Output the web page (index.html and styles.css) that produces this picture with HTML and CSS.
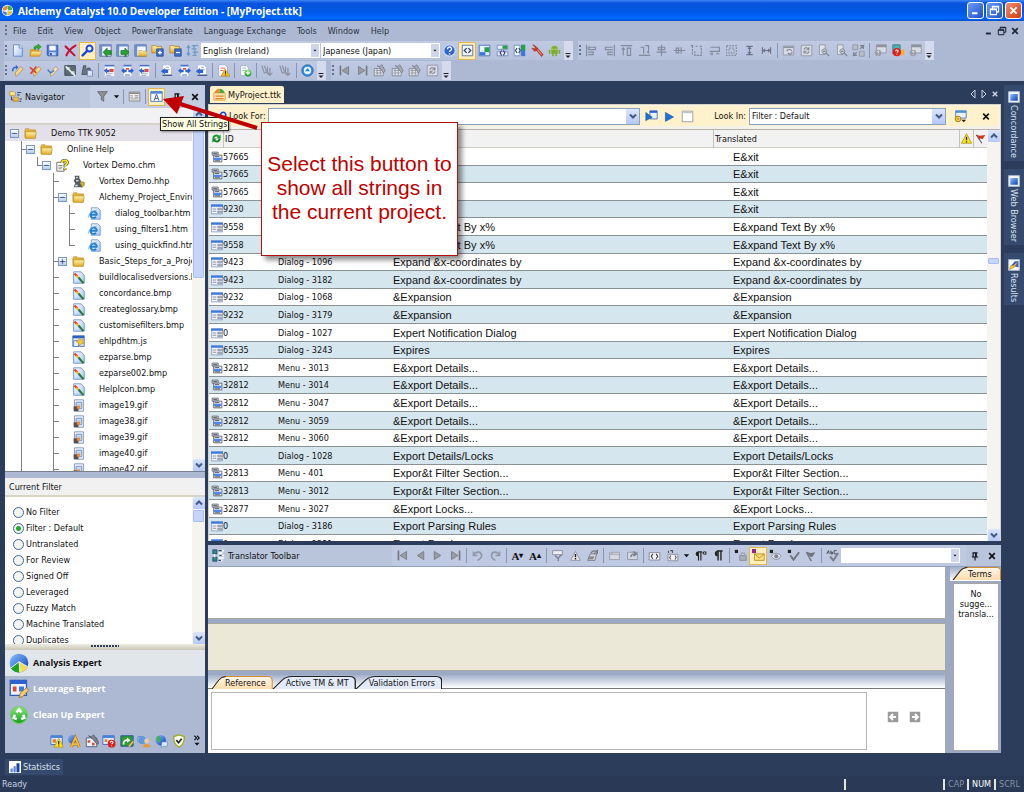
FILE: index.html
```html
<!DOCTYPE html>
<html lang="en">
<head>
<meta charset="UTF-8">
<meta name="viewport" content="width=device-width, initial-scale=1.0">
<title>Alchemy Catalyst 10.0 Developer Edition - [MyProject.ttk]</title>
<link rel="stylesheet" href="styles.css">
</head>
<body>

<!-- icon set -->
<svg class="sprite" aria-hidden="true">
    <defs>
        <linearGradient id="gBlue" x1="0" y1="0" x2="1" y2="1"><stop offset="0" stop-color="#8cc0ff"/><stop offset="1" stop-color="#0a3fb4"/></linearGradient>
        <linearGradient id="gGold" x1="0" y1="0" x2="0" y2="1"><stop offset="0" stop-color="#fff3a8"/><stop offset="1" stop-color="#e0a92a"/></linearGradient>
        <linearGradient id="gGreen" x1="0" y1="0" x2="0" y2="1"><stop offset="0" stop-color="#8fe87c"/><stop offset="1" stop-color="#119a1a"/></linearGradient>
        <linearGradient id="gTab" x1="0" y1="0" x2="0" y2="1"><stop offset="0" stop-color="#fff7ea"/><stop offset="1" stop-color="#ffdcae"/></linearGradient>
        <linearGradient id="gPage" x1="0" y1="0" x2="1" y2="1"><stop offset="0" stop-color="#fff"/><stop offset="1" stop-color="#a9c6f5"/></linearGradient>
    </defs>
    <symbol id="app" viewBox="0 0 16 16"><circle cx="8" cy="8" r="7" fill="#eef4ff"/><path d="M2 8a6 6 0 0 1 6-6v4L5 8z" fill="#f08a24"/><path d="M8 2a6 6 0 0 1 6 5l-5 1z" fill="#3fae49"/><path d="M14 9a6 6 0 0 1-6 5V9z" fill="#e8c021"/><path d="M7 14a6 6 0 0 1-5-5l5 1z" fill="#3a7be0"/></symbol>
    <symbol id="new" viewBox="0 0 16 16"><path d="M3 1h7l4 4v10H3z" fill="url(#gPage)" stroke="#5b7fc0"/><path d="M10 1v4h4" fill="#dce8fb" stroke="#5b7fc0"/></symbol>
    <symbol id="open" viewBox="0 0 16 16"><path d="M1 6h5l1 1h6v8H1z" fill="#d9a12c"/><path d="M3 9h13l-3 6H1z" fill="url(#gGold)" stroke="#b58520" stroke-width=".6"/><path d="M6 6c0-4 3-4 5-4V0l4 3.500-4 3.500V5C9 5 8 5 8 7z" fill="#2fae2f" stroke="#157515" stroke-width=".6"/></symbol>
    <symbol id="save" viewBox="0 0 16 16"><path d="M1.500 1.500h13v13h-12l-1-1z" fill="#4c7fdc" stroke="#2750a0"/><path d="M4 2h8v6H4z" fill="#f4f7ff"/><path d="M4 10h8v4H4z" fill="#c3d2f0"/><path d="M5 11h2v3H5z" fill="#2750a0"/></symbol>
    <symbol id="del" viewBox="0 0 16 16"><path d="M2 3l11 11M14 2C9 5 5 9 3 14" fill="none" stroke="#c41230" stroke-width="2.600" stroke-linecap="round"/></symbol>
    <symbol id="find" viewBox="0 0 16 16"><circle cx="10.500" cy="5.500" r="3.700" fill="#eaf2ff" stroke="#1c45e0" stroke-width="2.400"/><path d="M7.500 8.500L2 14" stroke="#1c45e0" stroke-width="3" stroke-linecap="round"/></symbol>
    <symbol id="wleft" viewBox="0 0 16 16"><path d="M1 1h14v14H1z" fill="#f3f6fc" stroke="#4a5f8f"/><path d="M1 1h14v2H1zM1 1h3v14H1z" fill="#6f8fc8"/><path d="M5 10l5-5v3h5v5h-5v3z" fill="#25a12e" stroke="#0e6416" stroke-width=".7"/></symbol>
    <symbol id="wright" viewBox="0 0 16 16"><path d="M1 1h14v14H1z" fill="#f3f6fc" stroke="#4a5f8f"/><path d="M1 1h14v2H1zM1 1h3v14H1z" fill="#6f8fc8"/><path d="M16 10l-5-5v3H6v5h5v3z" fill="#25a12e" stroke="#0e6416" stroke-width=".7"/></symbol>
    <symbol id="wfold" viewBox="0 0 16 16"><path d="M1 1h14v14H1z" fill="#f3f6fc" stroke="#4a5f8f"/><path d="M1 1h14v2H1zM1 1h3v14H1z" fill="#6f8fc8"/><path d="M6 8h4l1 1h5v6H6z" fill="url(#gGold)" stroke="#b58520" stroke-width=".6"/></symbol>
    <symbol id="fplus" viewBox="0 0 16 16"><path d="M1 2h5l1 1h6v8H1z" fill="url(#gGold)" stroke="#b58520"/><path d="M7 6h8v9H7z" fill="#3f6fc4" stroke="#274a90"/><path d="M11 8v5M8.500 10.500h5" stroke="#fff" stroke-width="1.500"/></symbol>
    <symbol id="fminus" viewBox="0 0 16 16"><path d="M1 2h5l1 1h6v8H1z" fill="url(#gGold)" stroke="#b58520"/><path d="M7 6h8v9H7z" fill="#3f6fc4" stroke="#274a90"/><path d="M8.500 10.500h5" stroke="#fff" stroke-width="1.500"/></symbol>
    <symbol id="lang" viewBox="0 0 16 16"><path d="M3 2v12M1 5l2-3 2 3M1 11l2 3 2-3M7 2h8M7 6h6M10 2v4M8 10h7M8 14h5M11 7v7" fill="none" stroke="#6f9bc4" stroke-width="1.500"/></symbol>
    <symbol id="help" viewBox="0 0 16 16"><circle cx="8" cy="8" r="7" fill="#2e63d4" stroke="#c7d8fa" stroke-width="1.500"/><path d="M5.500 6.500c0-4 5.500-3.500 5 0-.3 1.500-2.500 1.500-2.500 3.200M8 11.500v1.500" fill="none" stroke="#fff" stroke-width="1.700"/></symbol>
    <symbol id="code" viewBox="0 0 16 16"><path d="M1.500 1.500h13v13h-13z" fill="#eef3fc" stroke="#50617f"/><path d="M7 5L4 8l3 3M9 5l3 3-3 3" fill="none" stroke="#2c3d63" stroke-width="1.500"/></symbol>
    <symbol id="layg" viewBox="0 0 16 16"><path d="M1.500 1.500h13v13h-13z" fill="#dce8fb" stroke="#3c66b8"/><path d="M2 10h7v4H2z" fill="#3c78d8"/><path d="M8 4h6v6H8z" fill="#22a245"/><path d="M3 3h4v4H3z" fill="#fff"/></symbol>
    <symbol id="layc" viewBox="0 0 16 16"><path d="M1.500 1.500h13v5h-13zM1.500 9.500h13v5h-13z" fill="#e8effb" stroke="#6e86b8"/><path d="M8 2h6v4H8z" fill="#22a245"/><path d="M7 8l-2 3 2 3M9 8l2 3-2 3" fill="none" stroke="#2c3d63" stroke-width="1.300"/></symbol>
    <symbol id="layr" viewBox="0 0 16 16"><path d="M1.500 1.500h7v13h-7z" fill="#f2f5fb" stroke="#6e86b8"/><path d="M10 1h5v14h-5z" fill="#3c78d8"/><path d="M10 1h5v7h-5z" fill="#22a245"/><path d="M5 5L3 8l2 3M7 5l2 3-2 3" fill="none" stroke="#2c3d63" stroke-width="1.300"/></symbol>
    <symbol id="wrench" viewBox="0 0 16 16"><path d="M2 1l3 1 3 3-1 3-3 1-3-4 3 1 1-2z" fill="#d8422c" stroke="#8e2416" stroke-width=".6"/><path d="M6 7l2-2 7 8-2 2.500z" fill="#d8422c" stroke="#8e2416" stroke-width=".6"/><path d="M8 7l5 6" stroke="#f4b0a2"/></symbol>
    <symbol id="droid" viewBox="0 0 16 16"><path d="M4 6a4 4 0 0 1 8 0v6H4zM1 7h2v5H1zM13 7h2v5h-2zM5 12h2v3H5zM9 12h2v3H9z" fill="#7fae2e"/><path d="M5 1l1 2M11 1l-1 2M4 6.500h8" stroke="#b8d67a"/></symbol>
    <symbol id="al" viewBox="0 0 16 16"><path d="M2 1v14M4 4h9v3H4M4 10h6v3H4M6 3L4 5l2 2" fill="none" stroke="#828a9c" stroke-width="1.400"/></symbol>
    <symbol id="ar" viewBox="0 0 16 16"><path d="M14 1v14M12 4H3v3h9M12 10H6v3h6" fill="none" stroke="#828a9c" stroke-width="1.400"/></symbol>
    <symbol id="at" viewBox="0 0 16 16"><path d="M1 2h14M4 14V5l-2 2M4 5l2 2M9 5h4v9H9z" fill="none" stroke="#828a9c" stroke-width="1.400"/></symbol>
    <symbol id="ab" viewBox="0 0 16 16"><path d="M1 14h14M3 4h4v8M9 2h4v9l-2-2" fill="none" stroke="#828a9c" stroke-width="1.400"/></symbol>
    <symbol id="ac" viewBox="0 0 16 16"><path d="M8 1v14M4 4h8v3H4zM2 10h12" fill="none" stroke="#828a9c" stroke-width="1.400"/></symbol>
    <symbol id="am" viewBox="0 0 16 16"><path d="M1 8h14M4 5v6h3V5zM10 4v8" fill="none" stroke="#828a9c" stroke-width="1.400"/></symbol>
    <symbol id="sw" viewBox="0 0 16 16"><path d="M1 2h3M3 2v12M12 3h2v11H6V9M7 3h2" fill="none" stroke="#828a9c" stroke-width="1.400" stroke-dasharray="3 1"/></symbol>
    <symbol id="sh" viewBox="0 0 16 16"><path d="M3 4h11v5H2M2 12h4M14 12h-4M5 10v4" fill="none" stroke="#828a9c" stroke-width="1.400"/></symbol>
    <symbol id="sb" viewBox="0 0 16 16"><path d="M2 2h12v12H2zM5 5h6v6H5z" fill="none" stroke="#828a9c" stroke-width="1.400" stroke-dasharray="2 1.500"/></symbol>
    <symbol id="spv" viewBox="0 0 16 16"><path d="M4 3h8M4 13h8M8 4v8M6 6l2-2 2 2M6 10l2 2 2-2" fill="none" stroke="#6d7487" stroke-width="1.400"/></symbol>
    <symbol id="sph" viewBox="0 0 16 16"><path d="M3 4v8M13 4v8M4 8h8M6 6L4 8l2 2M10 6l2 2-2 2" fill="none" stroke="#6d7487" stroke-width="1.400"/></symbol>
    <symbol id="gwin" viewBox="0 0 16 16"><path d="M1.500 2.500h13v11h-13z" fill="#d9dce4" stroke="#8d929f"/><path d="M2 3h12v2H2z" fill="#8d929f"/><path d="M6 9c1-3 5-3 6 0M7 11l3 2 3-3" fill="none" stroke="#7d828f" stroke-width="1.500"/></symbol>
    <symbol id="gref" viewBox="0 0 16 16"><path d="M1.500 1.500h13v13h-13z" fill="#d9dce4" stroke="#8d929f"/><path d="M5 7c0-3 4-3 5-1M11 4v3H8M11 9c0 3-4 3-5 1M5 12V9h3" fill="none" stroke="#7d828f" stroke-width="1.300"/></symbol>
    <symbol id="gzoom" viewBox="0 0 16 16"><path d="M3 1h7v12H3z" fill="#dfe2ea" stroke="#8d929f"/><circle cx="9" cy="9" r="3" fill="#c8ccd6" stroke="#7d828f"/><path d="M11 11l4 4M7.500 9h3" stroke="#7d828f" stroke-width="1.500"/></symbol>
    <symbol id="gfit" viewBox="0 0 16 16"><path d="M1 1h6v6H1zM9 9h6v6H9z" fill="#b9bdc8" stroke="#8d929f"/><path d="M15 1l-5 5M1 15l5-5M10 2h4v4M2 10v4h4" fill="none" stroke="#7d828f" stroke-width="1.500"/></symbol>
    <symbol id="ghelp" viewBox="0 0 16 16"><path d="M3 1h12v10H3z" fill="#d9dce4" stroke="#8d929f"/><path d="M3 1h12v3H3z" fill="#8d929f"/><circle cx="5" cy="11" r="4" fill="#9a9eaa"/><path d="M4 10c0-2 3-1 2 0l-1 1M5 13v.8" stroke="#fff" fill="none"/></symbol>
    <symbol id="rhelp" viewBox="0 0 16 16"><path d="M1 1h9v11H1z" fill="#4fb0a8" stroke="#2b7a8a"/><circle cx="6" cy="10" r="5" fill="#df1d1d"/><path d="M4.500 9c0-2.500 3.500-2 3 0L6 10.500M6 12v1" stroke="#fff" fill="none" stroke-width="1.300"/><path d="M11 7h4v6l-4 2z" fill="#f3b12c"/></symbol>
    <symbol id="penb" viewBox="0 0 16 16"><path d="M6 15l-1-4 7-8 3 3-7 8z" fill="#f6d789" stroke="#9b7430" stroke-width=".7"/><path d="M1 9c0-5 3-6 5-6V1l3 3-3 3V5C4 5 3 6 3 9z" fill="#3468cc"/></symbol>
    <symbol id="penx" viewBox="0 0 16 16"><path d="M6 15l-1-4 7-8 3 3-7 8z" fill="#f6d789" stroke="#9b7430" stroke-width=".7"/><path d="M1 4l8 7M9 3l-7 9" stroke="#dc3b2a" stroke-width="1.900"/></symbol>
    <symbol id="penp" viewBox="0 0 16 16"><path d="M6 15l-1-4 7-8 3 3-7 8z" fill="#f6e3b4" stroke="#8e7a50" stroke-width=".7"/><path d="M2 7l4 4 4-3" fill="none" stroke="#4a72c4" stroke-width="1.700"/></symbol>
    <symbol id="wand" viewBox="0 0 16 16"><path d="M1 2h13v12H1z" fill="#5d6a78" stroke="#39424c"/><path d="M3 4h4v3H3zM9 9h4v4H9z" fill="#cde0c5"/><path d="M2 3l12 12" stroke="#e8ecf2" stroke-width="2"/></symbol>
    <symbol id="binoc" viewBox="0 0 16 16"><path d="M3 2h3v4l2 1V5h3l3 9H9l-1-4-1 3H1z" fill="#6a7380" stroke="#343b46" stroke-width=".7"/><path d="M8 8h6v7H8z" fill="#dfe7f5" stroke="#6e86b8"/></symbol>
    <symbol id="pgr" viewBox="0 0 16 16"><path d="M2 1h12v14H2z" fill="#fff" stroke="#b8c3dc" stroke-width=".6"/><path d="M2 1h12v2H2z" fill="#4a73c8"/><path d="M4 12h8M4 14h6" stroke="#8d9dc0"/><path d="M1 8l4-3v2h3v3H5v2z" fill="#2f62cc"/><path d="M8 6h5v4H8z" fill="#e04a3a"/></symbol>
    <symbol id="pgm" viewBox="0 0 16 16"><path d="M3 1h10v14H3z" fill="#fff" stroke="#b8c3dc" stroke-width=".6"/><path d="M3 1h10v2H3zM5 13h6v1H5z" fill="#4a73c8"/><path d="M0 8l4-3v2h3v3H4v2zM16 8l-4-3v2H9v3h3v2z" fill="#2f62cc"/><path d="M6 5h4v2H6z" fill="#e04a3a"/></symbol>
    <symbol id="pgb" viewBox="0 0 16 16"><path d="M3 1h8l3 3v9H3z" fill="#fff" stroke="#9aa9c8" stroke-width=".7"/><path d="M7 4h4M6 7h6" stroke="#8d9dc0"/><path d="M1 9l5-4v2h4v4H6v2z" fill="#2f62cc"/><path d="M3 14h12" stroke="#4b5d88" stroke-width="1.500"/></symbol>
    <symbol id="pgw" viewBox="0 0 16 16"><path d="M2 1h8l3 3v11H2z" fill="#fff" stroke="#9aa9c8"/><path d="M4 5h6M4 8h4" stroke="#e04a3a"/><path d="M10 6l6 9H5z" fill="#f7c21a" stroke="#a77b0a" stroke-width=".7"/><path d="M10.500 9v3M10.500 13v1" stroke="#222" stroke-width="1.200"/></symbol>
    <symbol id="pga" viewBox="0 0 16 16"><path d="M2 2h7l3 3v9H2z" fill="#fff" stroke="#9aa9c8"/><path d="M4 5h5M4 8h3" stroke="#8d9dc0"/><circle cx="11" cy="11" r="4.300" fill="url(#gGreen)"/><path d="M11 8.500v5M8.500 11h5" stroke="#fff" stroke-width="1.500"/></symbol>
    <symbol id="gclip" viewBox="0 0 16 16"><path d="M1 2l3 9 3-1M4 2l4 10 2-1M8 3v8l3 3 3-3M11 5v8" fill="none" stroke="#8d93a3" stroke-width="1.500"/></symbol>
    <symbol id="sync" viewBox="0 0 16 16"><circle cx="8" cy="8" r="7" fill="#3a8fd8" stroke="#1d5fa8"/><circle cx="8" cy="8" r="4.500" fill="#e9f4fd"/><path d="M8 5l3 4H5z" fill="#2a80cc"/></symbol>
    <symbol id="first" viewBox="0 0 16 16"><path d="M3 2v12" stroke="#74777f" stroke-width="2"/><path d="M13 3v10L5 8z" fill="#999ca3" stroke="#74777f"/></symbol>
    <symbol id="last" viewBox="0 0 16 16"><path d="M13 2v12" stroke="#74777f" stroke-width="2"/><path d="M3 3v10l8-5z" fill="#999ca3" stroke="#74777f"/></symbol>
    <symbol id="prev" viewBox="0 0 16 16"><path d="M12 3v10L4 8z" fill="#999ca3" stroke="#74777f"/></symbol>
    <symbol id="next" viewBox="0 0 16 16"><path d="M4 3v10l8-5z" fill="#999ca3" stroke="#74777f"/></symbol>
    <symbol id="gcal" viewBox="0 0 16 16"><path d="M1.500 5.500h11v9h-11z" fill="#e1e4ea" stroke="#7d828f"/><path d="M3 8h8M3 11h8M5 6v8M9 6v8" stroke="#8d929f"/><path d="M5 2l3 1 3-2 4 7-2 3-5-7z" fill="#a5a9b4" stroke="#666b78" stroke-width=".7"/></symbol>
    <symbol id="filter" viewBox="0 0 16 16"><path d="M2 2h12L9.500 8v6L6.500 12V8z" fill="#8d9096" stroke="#65686e"/></symbol>
    <symbol id="form" viewBox="0 0 16 16"><path d="M1.500 2.500h13v11h-13z" fill="#f4f4f4" stroke="#777"/><path d="M2 3h12v2H2z" fill="#888"/><path d="M3 7h3M8 7h5M3 9h3M8 9h5M3 11h10" stroke="#888"/></symbol>
    <symbol id="strings" viewBox="0 0 16 16"><path d="M1 2h14v12H1z" fill="#fff" stroke="#356bc4"/><path d="M1 2h14v2.500H1z" fill="#4b82da"/><path d="M5 13l3-8 3 8M6 10.500h4" fill="none" stroke="#3c5f9c" stroke-width="1.200"/></symbol>
    <symbol id="pin" viewBox="0 0 16 16"><path d="M4 3h8M5 3v6M10 3v6M9 3v6M3 9.500h10M8 10v5" fill="none" stroke="#111" stroke-width="1.800"/></symbol>
    <symbol id="x" viewBox="0 0 16 16"><path d="M3.500 3.500l9 9M12.500 3.500l-9 9" stroke="currentColor" stroke-width="2.600"/></symbol>
    <symbol id="restore" viewBox="0 0 16 16"><path d="M5 5V2h9v8h-3M2 6h9v8H2z" fill="none" stroke="currentColor" stroke-width="1.600"/><path d="M5 2.500h9M2 6.500h9" stroke="currentColor" stroke-width="2"/></symbol>
    <symbol id="mini" viewBox="0 0 16 16"><path d="M3 12h8" stroke="currentColor" stroke-width="3"/></symbol>
    <symbol id="down" viewBox="0 0 8 8"><path d="M1 2.500h6L4 6z" fill="currentColor"/></symbol>
    <symbol id="cdown" viewBox="0 0 12 12"><path d="M3 4.500l3 3 3-3" fill="none" stroke="#435a84" stroke-width="2"/></symbol>
    <symbol id="cup" viewBox="0 0 12 12"><path d="M3 7.500l3-3 3 3" fill="none" stroke="#435a84" stroke-width="2"/></symbol>
    <symbol id="tree" viewBox="0 0 16 16"><path d="M1 2h5l1 1h1v4H1zM5 9h7v5H5z" fill="url(#gGold)" stroke="#b58520" stroke-width=".7"/><path d="M10 3h5M10 6h3M3 8v4h2M13 11h3M13 14h2" stroke="#2c4fae" stroke-width="1.300" fill="none"/></symbol>
    <symbol id="folder" viewBox="0 0 16 16"><path d="M1 4l1-2h4l1 1.500h7V13H1z" fill="#e5b440" stroke="#b48a22" stroke-width=".7"/><path d="M2 6h13l-1 8H2z" fill="url(#gGold)" stroke="#b48a22" stroke-width=".7"/></symbol>
    <symbol id="chm" viewBox="0 0 16 16"><path d="M1 4h9v11H1z" fill="#fff" stroke="#555"/><path d="M3 8h5M3 10h5M3 12h4" stroke="#777"/><path d="M7 5c0-5 8-4 7 0-.5 2-3 2-3 4M11 11v2.500" fill="none" stroke="#555" stroke-width="3.600"/><path d="M7 5c0-5 8-4 7 0-.5 2-3 2-3 4M11 11v2" fill="none" stroke="#f7ea18" stroke-width="2.200"/></symbol>
    <symbol id="hhp" viewBox="0 0 16 16"><path d="M3 1h6v3l2 3-1 3 3 5H2l2-5-2-3 2-3z" fill="#555b60"/><path d="M5 2h2v2H5zM5 6h3v2H5zM4 12h3v2H4z" fill="#d5d9dc"/><path d="M10 8l5 1v4l-3 2z" fill="#d8b928" stroke="#6e5c10" stroke-width=".7"/></symbol>
    <symbol id="htm" viewBox="0 0 16 16"><path d="M4 1h8l3 3v11H4z" fill="url(#gPage)" stroke="#6a8cc8"/><path d="M11.500 9.500H3.500M11 9.500a4 4 0 1 0-1 2.800" fill="none" stroke="#1f7fd0" stroke-width="2.300"/><path d="M1 13c-1-4 4-9 10-9" fill="none" stroke="#56b3ea" stroke-width="1.200"/></symbol>
    <symbol id="bmp" viewBox="0 0 16 16"><path d="M2 1h9l4 4v10H2z" fill="url(#gPage)" stroke="#5e86cc"/><path d="M3 3l4 4" stroke="#e03c26" stroke-width="2.500"/><path d="M5 6l4 3" stroke="#f2bd22" stroke-width="2"/><path d="M8 8l6 7" stroke="#2b7a38" stroke-width="2.500"/></symbol>
    <symbol id="js" viewBox="0 0 16 16"><path d="M1 1h14v13H1z" fill="#dbe7fb" stroke="#3664b8"/><path d="M1 1h14v3H1z" fill="#2c5fc8"/><path d="M2 7h6v7H2z" fill="#eef4ff" stroke="#4a7ac8"/><path d="M9 3l2 3 3-1-1 3 2 2-4 1-2 3-1-4-3-2 3-1z" fill="#f2cb3c" stroke="#a98312" stroke-width=".6"/></symbol>
    <symbol id="gif" viewBox="0 0 16 16"><path d="M3 1h11v14H3z" fill="#f4f7fd" stroke="#6a84bb"/><path d="M5 4h7v8H5z" fill="#c6d8f2" stroke="#6a84bb"/><path d="M2 9h6v6H2z" fill="#5c5048"/><path d="M6 8h4v4H6z" fill="#ee8b3a"/></symbol>
    <symbol id="refresh" viewBox="0 0 16 16"><path d="M2 8c0-6 7-7 10-4l2-2v6H8l2-2C8 4 5 5 5 8z" fill="#17a02b"/><path d="M14 8c0 6-7 7-10 4l-2 2V8h6l-2 2c2 2 5 1 5-2z" fill="#0d8020"/></symbol>
    <symbol id="menu" viewBox="0 0 16 16"><path d="M1.500 1.500h8v4h-8z" fill="#e9e9ee" stroke="#444b5a"/><path d="M3.500 5.500h11v9h-11z" fill="#f4f4f8" stroke="#444b5a"/><path d="M3 3.500h5M5 7.500h6M5 13h7" stroke="#444b5a" stroke-width="1.200"/><path d="M4 9h10v3H4z" fill="#4f86f0"/></symbol>
    <symbol id="dlg" viewBox="0 0 16 16"><path d="M.5 2.500h15v12H.5z" fill="#f2f4f9" stroke="#7b8db4"/><path d="M0 2h16v3H0z" fill="#3c78e0"/><path d="M2 8h5M2 11h5" stroke="#8a93a8" stroke-width="1.300"/><path d="M9 7h5v2H9zM9 11h5v2H9z" fill="#c5cbd8" stroke="#69738a" stroke-width=".8"/></symbol>
    <symbol id="warn" viewBox="0 0 16 16"><path d="M8 1l7.500 14H.5z" fill="#fbe21c" stroke="#a98c08"/><path d="M8 5.500v5M8 12v1.700" stroke="#222" stroke-width="1.800"/></symbol>
    <symbol id="flag" viewBox="0 0 16 16"><path d="M1 2l6 2 8-1-4 6-3-1-1 1z" fill="#d6321e"/><path d="M2 3l8 12" stroke="#555" stroke-width="1.500"/></symbol>
    <symbol id="run" viewBox="0 0 16 16"><path d="M6 1h9v10H6z" fill="#eaf1ff" stroke="#3b6ac0"/><path d="M6 1h9v2.500H6z" fill="#2d63cc"/><path d="M1 3v10l8-4z" fill="#1f74d0" stroke="#0f4d98" stroke-width=".7"/></symbol>
    <symbol id="play" viewBox="0 0 16 16"><path d="M3 3v11l10-5.500z" fill="#1f74dc" stroke="#0f4d98" stroke-width=".7"/></symbol>
    <symbol id="blank" viewBox="0 0 16 16"><path d="M1.500 1.500h13v13h-13z" fill="#fff" stroke="#8b8f99"/><path d="M2 2h12v2H2z" fill="#c3c7d0"/></symbol>
    <symbol id="opts" viewBox="0 0 16 16"><path d="M2 1h13v9H2z" fill="#eaf1ff" stroke="#3b6ac0"/><path d="M2 1h13v2.500H2z" fill="#4a94d8"/><circle cx="5" cy="11" r="3.500" fill="#f6d04c" stroke="#94700f"/><circle cx="5" cy="11" r="1" fill="#94700f"/><path d="M9 12h6l-3 3z" fill="#222"/></symbol>
    <symbol id="trans" viewBox="0 0 16 16"><path d="M1 1h5v5H1zM1 10h5v5H1z" fill="#2e8a80" stroke="#28466e"/><path d="M8 2h7M8 5h5M8 11h7M8 14h5M8 8h7M3 6v4" stroke="#fff" stroke-width="2"/><path d="M8 2h4M9 8h3M8 14h3" stroke="#28466e" stroke-width="1.500"/></symbol>
    <symbol id="undo" viewBox="0 0 16 16"><path d="M3 3v5h5M3 8c3-6 10-5 10 0 0 3-3 5-5 6" fill="none" stroke="#9198a8" stroke-width="2"/></symbol>
    <symbol id="redo" viewBox="0 0 16 16"><path d="M13 3v5H8M13 8C10 2 3 3 3 8c0 3 3 5 5 6" fill="none" stroke="#9198a8" stroke-width="2"/></symbol>
    <symbol id="gnote" viewBox="0 0 16 16"><path d="M2 2h12v5H2z" fill="#eceef3" stroke="#80848f"/><path d="M13 7l-4 4v4M5 8l4 4" fill="none" stroke="#80848f" stroke-width="1.700"/></symbol>
    <symbol id="gwarn" viewBox="0 0 16 16"><path d="M8 3l6 11H2z" fill="#e6e7ea" stroke="#888c97"/><path d="M8 6v4M8 11v2" stroke="#222" stroke-width="1.700"/></symbol>
    <symbol id="gedit" viewBox="0 0 16 16"><path d="M5 6h8l-2 8H2z" fill="#d4d6da" stroke="#70737a"/><path d="M6 5c2-4 7-3 8-1M14 1v4h-4M4 10h6M3 12h6" fill="none" stroke="#70737a" stroke-width="1.500"/></symbol>
    <symbol id="gbox" viewBox="0 0 16 16"><path d="M2 4h12v9H2z" fill="#d5d9e2" stroke="#979dab"/><path d="M2 6.500h12M5 4v2" stroke="#979dab"/></symbol>
    <symbol id="gboxe" viewBox="0 0 16 16"><path d="M2 4h12v9H2z" fill="#d5d9e2" stroke="#888e9c"/><path d="M6 10c0-4 3-4 5-4M9 3l4 3-4 3" stroke="#777b86" stroke-width="1.700" fill="none"/></symbol>
    <symbol id="tag" viewBox="0 0 16 16"><path d="M1.500 4.500h13v9h-13z" fill="#f4f5f8" stroke="#797e8b"/><path d="M6 6L4 9l2 3M10 6l2 3-2 3" fill="none" stroke="#333" stroke-width="1.300"/></symbol>
    <symbol id="tagu" viewBox="0 0 16 16"><path d="M2.500 6.500h12v8h-12z" fill="#f4f5f8" stroke="#797e8b"/><path d="M6 8l-1.500 2.500L6 13M11 8l1.500 2.500L11 13M3 5V2M8 5V2H5" fill="none" stroke="#555" stroke-width="1.300"/></symbol>
    <symbol id="para" viewBox="0 0 16 16"><path d="M7 2a3.500 3.500 0 0 0 0 7z" fill="#222"/><path d="M7.500 2v12M11 2v12M6 2.500h7" stroke="#222" stroke-width="1.700"/></symbol>
    <symbol id="parad" viewBox="0 0 16 16"><path d="M5 3a3 3 0 0 0 0 6z" fill="#222"/><path d="M5.500 3v11M8.500 3v11M5 3.500h5M13 3l-2 2 2 2M14.500 3v4" fill="none" stroke="#222" stroke-width="1.400"/></symbol>
    <symbol id="lock" viewBox="0 0 16 16"><path d="M1 1h4v4H1z" fill="#222"/><path d="M7 8h8v6H7z" fill="#a9adb6" stroke="#838894"/><path d="M9 8V5h4v3" fill="none" stroke="#a0a4ae" stroke-width="1.500"/></symbol>
    <symbol id="mail" viewBox="0 0 16 16"><path d="M3 6h12v8H3z" fill="#fce07a" stroke="#b58520"/><path d="M3 6l6 5 6-5" fill="none" stroke="#b58520"/><path d="M0 0h5v5H0z" fill="#a0228c"/></symbol>
    <symbol id="eye" viewBox="0 0 16 16"><path d="M1 1h4v4H1z" fill="#222"/><path d="M3 9c3-5 9-5 12 0-3 5-9 5-12 0z" fill="#e3e5ea" stroke="#80848f"/><circle cx="9" cy="9" r="2.500" fill="#80848f"/></symbol>
    <symbol id="tick" viewBox="0 0 16 16"><path d="M1 1h4v4H1z" fill="#222"/><path d="M4 8l4 5 7-9" fill="none" stroke="#70747d" stroke-width="2.400"/></symbol>
    <symbol id="gflag" viewBox="0 0 16 16"><path d="M2 3l6 2 6-1-4 6-3-1z" fill="#70747d"/><path d="M3 4l6 11" stroke="#70747d" stroke-width="1.700"/></symbol>
    <symbol id="spell" viewBox="0 0 16 16"><path d="M5 9l4 5 6-9" fill="none" stroke="#7a7e87" stroke-width="2.400"/><path d="M1 6l2-4 1 4M6 2v4h2V4H6M13 2h-3v4h3" fill="none" stroke="#444" stroke-width="1.100"/></symbol>
    <symbol id="pie" viewBox="0 0 16 16"><circle cx="8" cy="8" r="7.500" fill="url(#gBlue)"/><path d="M8 7L1.500 12a7.500 7.500 0 0 0 6.500 3.500z" fill="#18a32c"/><path d="M8 7l7 4a7.500 7.500 0 0 1-7 4.500z" fill="#f5d95b"/><path d="M8 7l1 8.500M8 7l7 4M8 7l-6.500 5" stroke="#e8f2e0" stroke-width=".8"/></symbol>
    <symbol id="lev" viewBox="0 0 16 16"><path d="M1 1h13v12H1z" fill="#eef3ff" stroke="#2d5cb8"/><path d="M1 1h13v3H1z" fill="#2d63cc"/><path d="M3 6h3v4H3z" fill="#df4a2c"/><path d="M8 6h4v4H8z" fill="#3d78dc"/><path d="M8 15l1-4 5-4 2 2-5 5z" fill="#f2c877" stroke="#8e6a24" stroke-width=".6"/></symbol>
    <symbol id="clean" viewBox="0 0 16 16"><circle cx="8" cy="8" r="6.800" fill="url(#gGreen)" stroke="#6fce66"/><path d="M6 6l2-2.500L10 6M11.300 7.800l1 2.500-2.500 1M6.200 11.300l-2.500-1 1-2.500" fill="none" stroke="#fff" stroke-width="2"/></symbol>
    <symbol id="xwarn" viewBox="0 0 16 16"><path d="M1 2h13v10H1z" fill="#dfe9fb" stroke="#3b6ac0"/><path d="M1 2h13v2.500H1z" fill="#4a82d8"/><path d="M3 6h4v4H3z" fill="#e0812c"/><path d="M10 5l5.500 10h-11z" fill="#fbe21c" stroke="#a98c08" stroke-width=".7"/><path d="M10 8v4M10 13v1" stroke="#222" stroke-width="1.300"/></symbol>
    <symbol id="xfont" viewBox="0 0 16 16"><circle cx="6" cy="6" r="5" fill="url(#gBlue)"/><path d="M5 15L9.500 4 14 15M7 11.500h5" fill="none" stroke="#a66d10" stroke-width="3.200"/><path d="M5 15L9.500 4 14 15M7 11.500h5" fill="none" stroke="#f6bb3c" stroke-width="2"/></symbol>
    <symbol id="xcal" viewBox="0 0 16 16"><path d="M1.500 4.500h12v10h-12z" fill="#f1f3f8" stroke="#4a5672"/><path d="M3 7h3v3H3zM8 10h3v3H8z" fill="#d0552c"/><path d="M4 2l3 1 3-2 6 9-2 2-6-7z" fill="#7c8492" stroke="#3f4654" stroke-width=".7"/></symbol>
    <symbol id="xhelp" viewBox="0 0 16 16"><path d="M1 2h13v10H1z" fill="#dfe9fb" stroke="#3b6ac0"/><path d="M1 2h13v2.500H1z" fill="#4a82d8"/><path d="M3 6h3v3H3z" fill="#e0812c"/><circle cx="11" cy="11" r="4.500" fill="#df1d1d"/><path d="M9.500 10c0-2.500 3.500-2 3 0L11 11.500M11 13v1" fill="none" stroke="#fff" stroke-width="1.200"/></symbol>
    <symbol id="xgreen" viewBox="0 0 16 16"><path d="M1 2h14v12H1z" fill="#2f9a38" stroke="#20508e"/><path d="M3 12c0-5 3-6 5-6V4l4 3-4 3V8c-2 0-3 1-3 4z" fill="#f3fbf0"/><path d="M9 14l6-7 1 2-5 6z" fill="#f2c877" stroke="#8e6a24" stroke-width=".6"/></symbol>
    <symbol id="xuser" viewBox="0 0 16 16"><path d="M1 3h6v6H1z" fill="#cfe0fa" stroke="#5d87c8"/><circle cx="6" cy="7" r="4.500" fill="#5b9be0"/><circle cx="11" cy="8" r="2.800" fill="#f4c99c"/><path d="M7 15c0-5 8-5 8 0z" fill="#eb9a34"/></symbol>
    <symbol id="xglobe" viewBox="0 0 16 16"><circle cx="6.500" cy="7" r="6" fill="url(#gBlue)"/><path d="M2 3c3-2 5 0 4 2s1 3-1 5C3 9 1 6 2 3z" fill="#44b04a"/><path d="M8 9h6v5H9l-2 2z" fill="#dfe9fb" stroke="#5d87c8" stroke-width=".7"/></symbol>
    <symbol id="xshield" viewBox="0 0 16 16"><path d="M8 1l6 2c.5 6-2 10-6 12C4 13 1.500 9 2 3z" fill="#f6f8ee" stroke="#9fae2c" stroke-width="1.700"/><path d="M5 7l2.500 3L11 5.500" fill="none" stroke="#222" stroke-width="1.800"/></symbol>
    <symbol id="stats" viewBox="0 0 16 16"><path d="M0 0h16v16H0z" fill="#fff"/><path d="M2 10h3v5H2zM6 7h3v8H6z" fill="#5c86d4"/><path d="M10 3h4v12h-4z" fill="#1f3fa0"/></symbol>
    <symbol id="book" viewBox="0 0 16 16"><path d="M1 1h14v14H1z" fill="#fff" stroke="#b6c2dc" stroke-width="1.500"/><path d="M3 4h10v9H3z" fill="url(#gBlue)"/></symbol>
    <symbol id="res" viewBox="0 0 16 16"><path d="M1 1h14v14H1z" fill="#fff" stroke="#b6c2dc" stroke-width="1.500"/><path d="M9 3h5v8L4 9z" fill="#3a62c8"/><path d="M2 14l2-6 3 1 6-6-4 8z" fill="#f5c62b" stroke="#8e6a24" stroke-width=".5"/></symbol>
    <symbol id="doc" viewBox="0 0 16 16"><path d="M1 6h14v9H1z" fill="#f7e3b2" stroke="#d9a12c"/><path d="M2 6a6 5 0 0 1 6-5v5z" fill="#f08a24"/><path d="M8 1a6 5 0 0 1 6 5H8z" fill="#3fae49"/><path d="M3 10h10M3 13h10" stroke="#e0812c" stroke-width="1.500"/></symbol>
    <symbol id="tri" viewBox="0 0 8 10"><path d="M6 1v8L2 5z" fill="none" stroke="#c9d3e6"/></symbol>
    <symbol id="trir" viewBox="0 0 8 10"><path d="M2 1v8l4-4z" fill="none" stroke="#c9d3e6"/></symbol>
    <symbol id="more" viewBox="0 0 8 16"><path d="M1 2l2.500 2.500L1 7M4 2l2.500 2.500L4 7" fill="none" stroke="#111" stroke-width="1.300"/><path d="M1 10h6l-3 3z" fill="#111"/></symbol>
    <symbol id="hend" viewBox="0 0 8 16"><path d="M1.500 10.500h5" stroke="#222"/><path d="M1.500 12.500h5L4 15z" fill="#222"/></symbol>
    <symbol id="gl" viewBox="0 0 16 16"><path d="M1 1h14v14H1z" fill="#9b9b9b"/><path d="M12 8H5M8 4L4 8l4 4" fill="none" stroke="#fff" stroke-width="2.400"/></symbol>
    <symbol id="gr" viewBox="0 0 16 16"><path d="M1 1h14v14H1z" fill="#9b9b9b"/><path d="M4 8h7M8 4l4 4-4 4" fill="none" stroke="#fff" stroke-width="2.400"/></symbol>
</svg>

<header class="titlebar">
    <svg class="ico"><use href="#app"/></svg>
    <h1>Alchemy Catalyst 10.0 Developer Edition - [MyProject.ttk]</h1>
    <div class="winbtns">
        <button aria-label="Minimize"><svg class="ico"><use href="#mini"/></svg></button>
        <button aria-label="Restore"><svg class="ico"><use href="#restore"/></svg></button>
        <button class="close" aria-label="Close"><svg class="ico"><use href="#x"/></svg></button>
    </div>
</header>

<nav class="menubar">
    <i class="grip"></i>
    <button>File</button><button>Edit</button><button>View</button><button>Object</button><button>PowerTranslate</button><button>Language Exchange</button><button>Tools</button><button>Window</button><button>Help</button>
    <div class="mdi">
        <button aria-label="Minimize document"><svg><use href="#mini"/></svg></button>
        <button aria-label="Restore document"><svg><use href="#restore"/></svg></button>
        <button aria-label="Close document"><svg><use href="#x"/></svg></button>
    </div>
</nav>

<div class="toolbars">
    <div class="toolrow">
        <div class="toolbar">
            <i class="grip"></i>
            <div class="tools">
                <button aria-label="New"><svg><use href="#new"/></svg></button>
                <button aria-label="Open"><svg><use href="#open"/></svg></button>
                <button aria-label="Save"><svg><use href="#save"/></svg></button>
                <button aria-label="Delete"><svg><use href="#del"/></svg></button>
                <button class="on" aria-label="Find"><svg><use href="#find"/></svg></button>
                <button aria-label="Insert files"><svg><use href="#wleft"/></svg></button>
                <button aria-label="Extract files"><svg><use href="#wright"/></svg></button>
                <button aria-label="Insert folder"><svg><use href="#wfold"/></svg></button>
                <button aria-label="Expand"><svg><use href="#fplus"/></svg></button>
                <button aria-label="Collapse"><svg><use href="#fminus"/></svg></button>
                <button aria-label="Languages"><svg><use href="#lang"/></svg></button>
            </div>
            <span class="combo"><select aria-label="Source language"><option>English (Ireland)</option></select><svg><use href="#down"/></svg></span>
            <span class="combo"><select aria-label="Target language"><option>Japanese (Japan)</option></select><svg><use href="#down"/></svg></span>
            <div class="tools">
                <button aria-label="Help"><svg><use href="#help"/></svg></button>
                <button class="on" aria-label="Tags"><svg><use href="#code"/></svg></button>
                <button aria-label="Layout"><svg><use href="#layg"/></svg></button>
                <button aria-label="Split horizontal"><svg><use href="#layc"/></svg></button>
                <button aria-label="Split vertical"><svg><use href="#layr"/></svg></button>
                <button aria-label="Options"><svg><use href="#wrench"/></svg></button>
                <button aria-label="Android"><svg><use href="#droid"/></svg></button>
            </div>
            <button class="hend" aria-label="Toolbar options"><svg><use href="#hend"/></svg></button>
        </div>
        <div class="toolbar">
            <i class="grip"></i>
            <div class="tools">
                <button aria-label="Align left"><svg><use href="#al"/></svg></button>
                <button aria-label="Align right"><svg><use href="#ar"/></svg></button>
                <button aria-label="Align top"><svg><use href="#at"/></svg></button>
                <button aria-label="Align bottom"><svg><use href="#ab"/></svg></button>
                <button aria-label="Centre vertical"><svg><use href="#ac"/></svg></button>
                <button aria-label="Centre horizontal"><svg><use href="#am"/></svg></button>
                <button aria-label="Same width"><svg><use href="#sw"/></svg></button>
                <button aria-label="Same height"><svg><use href="#sh"/></svg></button>
                <button aria-label="Same size"><svg><use href="#sb"/></svg></button>
                <button aria-label="Space down"><svg><use href="#spv"/></svg></button>
                <button aria-label="Space across"><svg><use href="#sph"/></svg></button>
            </div>
            <i class="sep"></i>
            <div class="tools">
                <button aria-label="Test dialog"><svg><use href="#gwin"/></svg></button>
                <button aria-label="Refresh view"><svg><use href="#gref"/></svg></button>
                <button aria-label="Zoom in"><svg><use href="#gzoom"/></svg></button>
                <button aria-label="Zoom out"><svg><use href="#gzoom"/></svg></button>
                <button aria-label="Fit"><svg><use href="#gfit"/></svg></button>
            </div>
            <i class="sep"></i>
            <div class="tools">
                <button aria-label="Previous error"><svg><use href="#ghelp"/></svg></button>
                <button aria-label="Errors"><svg><use href="#rhelp"/></svg></button>
                <button aria-label="Next error"><svg><use href="#ghelp"/></svg></button>
            </div>
            <button class="hend" aria-label="Toolbar options"><svg><use href="#hend"/></svg></button>
        </div>
    </div>
    <div class="toolrow">
        <div class="toolbar">
            <i class="grip"></i>
            <div class="tools">
                <button aria-label="Edit back"><svg><use href="#penb"/></svg></button>
                <button aria-label="Edit reject"><svg><use href="#penx"/></svg></button>
                <button aria-label="Edit"><svg><use href="#penp"/></svg></button>
                <button aria-label="Pseudo translate"><svg><use href="#wand"/></svg></button>
                <button aria-label="Find in files"><svg><use href="#binoc"/></svg></button>
            </div>
            <i class="sep"></i>
            <div class="tools">
                <button aria-label="Leverage"><svg><use href="#pgr"/></svg></button>
                <button aria-label="Merge"><svg><use href="#pgm"/></svg></button>
                <button aria-label="Swap"><svg><use href="#pgr"/></svg></button>
            </div>
            <i class="sep"></i>
            <div class="tools">
                <button aria-label="Import"><svg><use href="#pgb"/></svg></button>
                <button aria-label="Exchange"><svg><use href="#pgm"/></svg></button>
                <button aria-label="Export"><svg><use href="#pgb"/></svg></button>
            </div>
            <i class="sep"></i>
            <div class="tools"><button aria-label="Validate"><svg><use href="#pgw"/></svg></button></div>
            <i class="sep"></i>
            <div class="tools"><button aria-label="Add entry"><svg><use href="#pga"/></svg></button></div>
            <i class="sep"></i>
            <div class="tools">
                <button aria-label="Clip"><svg><use href="#gclip"/></svg></button>
                <button aria-label="Unclip"><svg><use href="#gclip"/></svg></button>
            </div>
            <i class="sep"></i>
            <div class="tools"><button aria-label="Synchronise"><svg><use href="#sync"/></svg></button></div>
            <button class="hend" aria-label="Toolbar options"><svg><use href="#hend"/></svg></button>
        </div>
        <div class="toolbar">
            <i class="grip"></i>
            <div class="tools">
                <button aria-label="First"><svg><use href="#first"/></svg></button>
                <button aria-label="Last"><svg><use href="#last"/></svg></button>
                <button aria-label="Run"><svg><use href="#gcal"/></svg></button>
                <button aria-label="Run all"><svg><use href="#gcal"/></svg></button>
                <button aria-label="Run again"><svg><use href="#gcal"/></svg></button>
                <button aria-label="Update"><svg><use href="#gref"/></svg></button>
            </div>
            <button class="hend" aria-label="Toolbar options"><svg><use href="#hend"/></svg></button>
        </div>
    </div>
</div>

<div class="workspace">
    <aside class="navigator">
        <div class="panel-head">
            <svg class="ico"><use href="#tree"/></svg><h2>Navigator</h2>
            <div class="head-tools">
                <button class="wide" aria-label="Filter"><svg><use href="#filter"/></svg><svg class="arrow"><use href="#down"/></svg></button>
                <i class="sep"></i>
                <button aria-label="Show form"><svg><use href="#form"/></svg></button>
                <i class="sep"></i>
                <button class="on" aria-label="Show All Strings"><svg><use href="#strings"/></svg></button>
                <button class="plain" aria-label="Pin"><svg><use href="#pin"/></svg></button>
                <button class="plain" aria-label="Close navigator"><svg><use href="#x"/></svg></button>
            </div>
        </div>
        <div class="tree-pane">
            <div class="tree-scroll">
                <div class="tree-head"></div>
                <ul class="tree">
                    <li>
                        <div class="row sel"><i class="exp">−</i><svg><use href="#folder"/></svg><span>Demo TTK 9052</span></div>
                        <ul>
                            <li>
                                <div class="row"><i class="exp">−</i><svg><use href="#folder"/></svg><span>Online Help</span></div>
                                <ul>
                                    <li class="end">
                                        <div class="row"><i class="exp">−</i><svg><use href="#chm"/></svg><span>Vortex Demo.chm</span></div>
                                        <ul>
                                            <li><div class="row"><i></i><svg><use href="#hhp"/></svg><span>Vortex Demo.hhp</span></div></li>
                                            <li>
                                                <div class="row"><i class="exp">−</i><svg><use href="#folder"/></svg><span>Alchemy_Project_Environment</span></div>
                                                <ul>
                                                    <li><div class="row"><i></i><svg><use href="#htm"/></svg><span>dialog_toolbar.htm</span></div></li>
                                                    <li><div class="row"><i></i><svg><use href="#htm"/></svg><span>using_filters1.htm</span></div></li>
                                                    <li class="end"><div class="row"><i></i><svg><use href="#htm"/></svg><span>using_quickfind.htm</span></div></li>
                                                </ul>
                                            </li>
                                            <li><div class="row"><i class="exp">+</i><svg><use href="#folder"/></svg><span>Basic_Steps_for_a_Project</span></div></li>
                                            <li><div class="row"><i></i><svg><use href="#bmp"/></svg><span>buildlocalisedversions.bmp</span></div></li>
                                            <li><div class="row"><i></i><svg><use href="#bmp"/></svg><span>concordance.bmp</span></div></li>
                                            <li><div class="row"><i></i><svg><use href="#bmp"/></svg><span>createglossary.bmp</span></div></li>
                                            <li><div class="row"><i></i><svg><use href="#bmp"/></svg><span>customisefilters.bmp</span></div></li>
                                            <li><div class="row"><i></i><svg><use href="#js"/></svg><span>ehlpdhtm.js</span></div></li>
                                            <li><div class="row"><i></i><svg><use href="#bmp"/></svg><span>ezparse.bmp</span></div></li>
                                            <li><div class="row"><i></i><svg><use href="#bmp"/></svg><span>ezparse002.bmp</span></div></li>
                                            <li><div class="row"><i></i><svg><use href="#bmp"/></svg><span>HelpIcon.bmp</span></div></li>
                                            <li><div class="row"><i></i><svg><use href="#gif"/></svg><span>image19.gif</span></div></li>
                                            <li><div class="row"><i></i><svg><use href="#gif"/></svg><span>image38.gif</span></div></li>
                                            <li><div class="row"><i></i><svg><use href="#gif"/></svg><span>image39.gif</span></div></li>
                                            <li><div class="row"><i></i><svg><use href="#gif"/></svg><span>image40.gif</span></div></li>
                                            <li><div class="row"><i></i><svg><use href="#gif"/></svg><span>image42.gif</span></div></li>
                                        </ul>
                                    </li>
                                </ul>
                            </li>
                        </ul>
                    </li>
                </ul>
            </div>
            <div class="scrollbar tree-bar"><button aria-label="Up"><svg><use href="#cup"/></svg></button><i class="thumb"></i><button aria-label="Down"><svg><use href="#cdown"/></svg></button></div>
        </div>
        <h3 class="filter-head">Current Filter</h3>
        <div class="filter-pane">
            <div class="filters">
                <label><input type="radio" name="filter">No Filter</label>
                <label><input type="radio" name="filter" checked>Filter : Default</label>
                <label><input type="radio" name="filter">Untranslated</label>
                <label><input type="radio" name="filter">For Review</label>
                <label><input type="radio" name="filter">Signed Off</label>
                <label><input type="radio" name="filter">Leveraged</label>
                <label><input type="radio" name="filter">Fuzzy Match</label>
                <label><input type="radio" name="filter">Machine Translated</label>
                <label><input type="radio" name="filter">Duplicates</label>
            </div>
            <div class="scrollbar"><button aria-label="Up"><svg><use href="#cup"/></svg></button><i class="thumb"></i><button aria-label="Down"><svg><use href="#cdown"/></svg></button></div>
        </div>
        <div class="dots"><i></i></div>
        <button class="expert active"><svg><use href="#pie"/></svg>Analysis Expert</button>
        <button class="expert"><svg><use href="#lev"/></svg>Leverage Expert</button>
        <button class="expert"><svg><use href="#clean"/></svg>Clean Up Expert</button>
        <div class="shortcuts tools">
            <button aria-label="Validate Expert"><svg><use href="#xwarn"/></svg></button>
            <button aria-label="Font Expert"><svg><use href="#xfont"/></svg></button>
            <button aria-label="Update Expert"><svg><use href="#xcal"/></svg></button>
            <button aria-label="Query Expert"><svg><use href="#xhelp"/></svg></button>
            <button aria-label="Export Expert"><svg><use href="#xgreen"/></svg></button>
            <button aria-label="User Expert"><svg><use href="#xuser"/></svg></button>
            <button aria-label="Translate Expert"><svg><use href="#xglobe"/></svg></button>
            <button aria-label="Security Expert"><svg><use href="#xshield"/></svg></button>
            <button aria-label="More"><svg><use href="#more"/></svg></button>
        </div>
    </aside>

    <main class="centre">
        <div class="doctabs">
            <button class="doctab"><svg><use href="#doc"/></svg>MyProject.ttk</button>
            <div class="tabnav">
                <button aria-label="Previous tab"><svg><use href="#tri"/></svg></button>
                <button aria-label="Next tab"><svg><use href="#trir"/></svg></button>
                <button aria-label="Close tab"><svg><use href="#x"/></svg></button>
            </div>
        </div>

        <section class="document">
            <div class="lookbar">
                <svg><use href="#find"/></svg>
                <label for="lookfor">Look For:</label>
                <span class="combo big lookfor"><input type="text" id="lookfor"><i><svg><use href="#cdown"/></svg></i></span>
                <button aria-label="Find all"><svg><use href="#run"/></svg></button>
                <button aria-label="Find next"><svg><use href="#play"/></svg></button>
                <button aria-label="Stop"><svg><use href="#blank"/></svg></button>
                <label class="lookin" for="lookin">Look In:</label>
                <span class="combo big"><select id="lookin"><option>Filter : Default</option></select><i><svg><use href="#cdown"/></svg></i></span>
                <button class="opt" aria-label="Search options"><svg><use href="#opts"/></svg></button>
                <button class="opt" aria-label="Close search"><svg class="small"><use href="#x"/></svg></button>
            </div>
            <div class="gridpane">
                <div class="gridscroll">
                    <table class="grid">
                        <colgroup><col class="c-icon"><col class="c-id"><col class="c-type"><col class="c-src"><col><col class="c-flag"><col class="c-flag"></colgroup>
                        <thead>
                            <tr><th><svg><use href="#refresh"/></svg></th><th>ID</th><th></th><th></th><th>Translated</th><th><svg><use href="#warn"/></svg></th><th><svg><use href="#flag"/></svg></th></tr>
                        </thead>
                        <tbody>
                            <tr><td><svg><use href="#menu"/></svg></td><td>57665</td><td></td><td></td><td colspan="3">E&amp;xit</td></tr>
                            <tr><td><svg><use href="#menu"/></svg></td><td>57665</td><td></td><td></td><td colspan="3">E&amp;xit</td></tr>
                            <tr><td><svg><use href="#menu"/></svg></td><td>57665</td><td></td><td></td><td colspan="3">E&amp;xit</td></tr>
                            <tr><td><svg><use href="#dlg"/></svg></td><td>9230</td><td></td><td></td><td colspan="3">E&amp;xit</td></tr>
                            <tr><td><svg><use href="#dlg"/></svg></td><td>9558</td><td></td><td>E&amp;xpand Text By x%</td><td colspan="3">E&amp;xpand Text By x%</td></tr>
                            <tr><td><svg><use href="#dlg"/></svg></td><td>9558</td><td></td><td>E&amp;xpand Text By x%</td><td colspan="3">E&amp;xpand Text By x%</td></tr>
                            <tr><td><svg><use href="#dlg"/></svg></td><td>9423</td><td>Dialog - 1096</td><td>Expand &amp;x-coordinates by</td><td colspan="3">Expand &amp;x-coordinates by</td></tr>
                            <tr><td><svg><use href="#dlg"/></svg></td><td>9423</td><td>Dialog - 3182</td><td>Expand &amp;x-coordinates by</td><td colspan="3">Expand &amp;x-coordinates by</td></tr>
                            <tr><td><svg><use href="#dlg"/></svg></td><td>9232</td><td>Dialog - 1068</td><td>&amp;Expansion</td><td colspan="3">&amp;Expansion</td></tr>
                            <tr><td><svg><use href="#dlg"/></svg></td><td>9232</td><td>Dialog - 3179</td><td>&amp;Expansion</td><td colspan="3">&amp;Expansion</td></tr>
                            <tr><td><svg><use href="#dlg"/></svg></td><td>0</td><td>Dialog - 1027</td><td>Expert Notification Dialog</td><td colspan="3">Expert Notification Dialog</td></tr>
                            <tr><td><svg><use href="#dlg"/></svg></td><td>65535</td><td>Dialog - 3243</td><td>Expires</td><td colspan="3">Expires</td></tr>
                            <tr><td><svg><use href="#menu"/></svg></td><td>32812</td><td>Menu - 3013</td><td>E&amp;xport Details...</td><td colspan="3">E&amp;xport Details...</td></tr>
                            <tr><td><svg><use href="#menu"/></svg></td><td>32812</td><td>Menu - 3014</td><td>E&amp;xport Details...</td><td colspan="3">E&amp;xport Details...</td></tr>
                            <tr><td><svg><use href="#menu"/></svg></td><td>32812</td><td>Menu - 3047</td><td>&amp;Export Details...</td><td colspan="3">&amp;Export Details...</td></tr>
                            <tr><td><svg><use href="#menu"/></svg></td><td>32812</td><td>Menu - 3059</td><td>&amp;Export Details...</td><td colspan="3">&amp;Export Details...</td></tr>
                            <tr><td><svg><use href="#menu"/></svg></td><td>32812</td><td>Menu - 3060</td><td>&amp;Export Details...</td><td colspan="3">&amp;Export Details...</td></tr>
                            <tr><td><svg><use href="#dlg"/></svg></td><td>0</td><td>Dialog - 1028</td><td>Export Details/Locks</td><td colspan="3">Export Details/Locks</td></tr>
                            <tr><td><svg><use href="#menu"/></svg></td><td>32813</td><td>Menu - 401</td><td>Expor&amp;t Filter Section...</td><td colspan="3">Expor&amp;t Filter Section...</td></tr>
                            <tr><td><svg><use href="#menu"/></svg></td><td>32813</td><td>Menu - 3012</td><td>Expor&amp;t Filter Section...</td><td colspan="3">Expor&amp;t Filter Section...</td></tr>
                            <tr><td><svg><use href="#menu"/></svg></td><td>32877</td><td>Menu - 3027</td><td>&amp;Export Locks...</td><td colspan="3">&amp;Export Locks...</td></tr>
                            <tr><td><svg><use href="#dlg"/></svg></td><td>0</td><td>Dialog - 3186</td><td>Export Parsing Rules</td><td colspan="3">Export Parsing Rules</td></tr>
                            <tr><td><svg><use href="#dlg"/></svg></td><td>0</td><td>Dialog - 1221</td><td>Expert Parsing</td><td colspan="3">Expert Parsing</td></tr>
                        </tbody>
                    </table>
                </div>
                <div class="scrollbar grid-bar"><button aria-label="Up"><svg><use href="#cup"/></svg></button><i class="thumb"></i><button aria-label="Down"><svg><use href="#cdown"/></svg></button></div>
            </div>
        </section>

        <section class="translator">
            <div class="trans-head">
                <svg class="ico"><use href="#trans"/></svg><h2>Translator Toolbar</h2>
                <div class="trans-tools">
                    <div class="tools">
                        <button aria-label="First string"><svg><use href="#first"/></svg></button>
                        <button aria-label="Previous string"><svg><use href="#prev"/></svg></button>
                        <button aria-label="Next string"><svg><use href="#next"/></svg></button>
                        <button aria-label="Last string"><svg><use href="#last"/></svg></button>
                    </div>
                    <i class="sep"></i>
                    <div class="tools">
                        <button aria-label="Undo"><svg><use href="#undo"/></svg></button>
                        <button aria-label="Redo"><svg><use href="#redo"/></svg></button>
                    </div>
                    <i class="sep"></i>
                    <div class="tools">
                        <button class="letter" aria-label="Smaller text">A<sup>▾</sup></button>
                        <button class="letter" aria-label="Larger text">A<sup>▴</sup></button>
                    </div>
                    <i class="sep"></i>
                    <div class="tools">
                        <button aria-label="Notes"><svg><use href="#gnote"/></svg></button>
                        <button aria-label="Warnings"><svg><use href="#gwarn"/></svg></button>
                        <button aria-label="Revert"><svg><use href="#gedit"/></svg></button>
                    </div>
                    <i class="sep"></i>
                    <div class="tools">
                        <button aria-label="Panel"><svg><use href="#gbox"/></svg></button>
                        <button aria-label="Copy source"><svg><use href="#gboxe"/></svg></button>
                    </div>
                    <i class="sep"></i>
                    <div class="tools">
                        <button aria-label="Insert tag"><svg><use href="#tag"/></svg></button>
                        <button aria-label="Tag list"><svg><use href="#tagu"/></svg></button>
                    </div>
                    <svg class="arrow"><use href="#down"/></svg>
                    <div class="tools">
                        <button aria-label="Direction"><svg><use href="#parad"/></svg></button>
                        <button aria-label="Show marks"><svg><use href="#para"/></svg></button>
                    </div>
                    <i class="sep"></i>
                    <div class="tools">
                        <button aria-label="Lock"><svg><use href="#lock"/></svg></button>
                        <button class="on" aria-label="For translation"><svg><use href="#mail"/></svg></button>
                        <button aria-label="Review"><svg><use href="#eye"/></svg></button>
                        <button aria-label="Sign off"><svg><use href="#tick"/></svg></button>
                        <button aria-label="Flag"><svg><use href="#gflag"/></svg></button>
                    </div>
                    <i class="sep"></i>
                    <div class="tools"><button aria-label="Spelling"><svg><use href="#spell"/></svg></button></div>
                    <span class="combo"><select aria-label="Dictionary"><option></option></select><svg><use href="#down"/></svg></span>
                </div>
                <button class="plain" aria-label="Pin translator"><svg><use href="#pin"/></svg></button>
                <button class="plain" aria-label="Close translator"><svg><use href="#x"/></svg></button>
            </div>
            <div class="trans-body">
                <div class="editors">
                    <textarea class="source" aria-label="Source text"></textarea>
                    <textarea class="target" aria-label="Translation"></textarea>
                    <div class="reftabs">
                        <button class="tab active"><svg class="shape" preserveAspectRatio="none" viewBox="0 0 62 13"><path d="M0 13L7 4Q10 .5 14 .5H57Q61.500 .5 61.500 5V13" fill="url(#gTab)" stroke="#d28a2e"/><path d="M0 13L7 4Q10 .5 14 .5" fill="none" stroke="#222"/></svg><span>Reference</span></button>
                        <button class="tab"><svg class="shape" preserveAspectRatio="none" viewBox="0 0 62 13"><path d="M0 13L7 4Q10 .5 14 .5H57Q61.500 .5 61.500 5V13" fill="#e3ebf9" stroke="#222"/></svg><span>Active TM &amp; MT</span></button>
                        <button class="tab"><svg class="shape" preserveAspectRatio="none" viewBox="0 0 62 13"><path d="M0 13L7 4Q10 .5 14 .5H57Q61.500 .5 61.500 5V13" fill="#e3ebf9" stroke="#222"/></svg><span>Validation Errors</span></button>
                    </div>
                    <div class="reference">
                        <textarea aria-label="Reference text"></textarea>
                        <div class="refnav">
                            <button aria-label="Previous reference"><svg><use href="#gl"/></svg></button>
                            <button aria-label="Next reference"><svg><use href="#gr"/></svg></button>
                        </div>
                    </div>
                </div>
                <div class="terms">
                    <button class="tab active"><svg class="shape" preserveAspectRatio="none" viewBox="0 0 50 13"><path d="M3 13L10 4Q13 .5 17 .5H46Q49.500 .5 49.500 4V13" fill="url(#gTab)" stroke="#d28a2e"/><path d="M3 13L10 4Q13 .5 17 .5" fill="none" stroke="#222"/></svg><span>Terms</span></button>
                    <p>No<br>sugge...<br>transla...</p>
                </div>
            </div>
        </section>
    </main>

    <div class="sidetabs">
        <button><svg><use href="#book"/></svg>Concordance</button>
        <button><svg><use href="#book"/></svg>Web Browser</button>
        <button><svg><use href="#res"/></svg>Results</button>
    </div>
</div>

<div class="dock"><button><svg><use href="#stats"/></svg>Statistics</button></div>
<footer class="statusbar"><span class="ready">Ready</span><i></i><span class="fill"></span><i></i><span>CAP</span><i></i><span class="lit">NUM</span><i></i><span>SCRL</span></footer>

<!-- help overlay -->
<div class="tooltip">Show All Strings</div>
<svg class="pointer" viewBox="0 0 100 40"><path d="M95 32L15 7" stroke="#c00000" stroke-width="4"/><path d="M1 3L22 0 15 18z" fill="#c00000"/></svg>
<div class="callout">Select this button to show all strings in the current project.</div>

</body>
</html>
```

FILE: styles.css
```css
* {
    box-sizing: border-box;
}
body {
    margin: 0;
    height: 100vh;
    display: flex;
    flex-direction: column;
    overflow: hidden;
    background-color: #2c3d5c;
    color: #111;
    font-family: "DejaVu Sans Condensed", "DejaVu Sans", sans-serif;
    font-size: 9px;
    line-height: 12px;
}
h1, h2, h3, p, ul {
    margin: 0;
    padding: 0;
    font-size: 9px;
    font-weight: normal;
    list-style: none;
}
button, input, select, textarea {
    margin: 0;
    padding: 0;
    border: none;
    border-radius: 0;
    background: none;
    color: inherit;
    font: inherit;
    outline: none;
}
svg {
    display: block;
    flex: none;
    width: 13px;
    height: 13px;
}
.sprite {
    position: absolute;
    width: 0;
    height: 0;
}

/* title bar */
.titlebar {
    flex: none;
    height: 21px;
    display: flex;
    align-items: center;
    gap: 4px;
    padding: 0 2px 0 1px;
    background: linear-gradient(#3a86f5 0, #0a52dc 15%, #0058e6 55%, #0067ff 85%, #0050d0 100%);
    color: #fff;
}
.titlebar h1 {
    flex: 1;
    font-family: "Open Sans", sans-serif;
    font-size: 10px;
    font-weight: bold;
}
.winbtns {
    display: flex;
    gap: 2px;
}
.winbtns button {
    width: 17px;
    height: 17px;
    display: flex;
    align-items: center;
    justify-content: center;
    border: 1px solid #fff;
    border-radius: 3px;
    background: linear-gradient(135deg, #6c9cf8, #1f50c8);
}
.winbtns svg {
    width: 11px;
    height: 11px;
}
.winbtns .close {
    background: linear-gradient(135deg, #f09070, #cf3a12);
}

/* menu */
.menubar {
    flex: none;
    height: 20px;
    display: flex;
    align-items: center;
    padding: 0 4px 0 5px;
    background-color: #adb9d2;
    color: #2a3346;
}
.menubar > button {
    padding: 0 5px 0 6px;
}
.grip {
    flex: none;
    width: 2px;
    height: 12px;
    background: repeating-linear-gradient(#66728e 0 2px, transparent 2px 4px);
}
.mdi {
    margin-left: auto;
    display: flex;
    gap: 3px;
    color: #1c2638;
}
.mdi svg {
    width: 10px;
    height: 10px;
}

/* toolbars */
.toolbars {
    flex: none;
    background-color: #adb9d2;
}
.toolrow {
    display: flex;
    gap: 5px;
    height: 20px;
    padding-left: 4px;
}
.toolbar {
    display: flex;
    align-items: center;
    height: 19px;
    padding-left: 1px;
    background: linear-gradient(#bfc9e2, #b6c1dc);
}
.tools {
    display: flex;
    align-items: center;
}
.toolbar .grip + .tools {
    margin-left: 2px;
}
.tools button {
    width: 17px;
    height: 18px;
    display: flex;
    align-items: center;
    justify-content: center;
}
.tools button:nth-child(even) {
    width: 18px;
}
.on {
    border: 1px solid #e5b550;
    background-color: #fff0c0;
}
.sep {
    flex: none;
    width: 1px;
    height: 15px;
    margin: 0 2px;
    background-color: #8794b4;
}
.hend {
    width: 9px;
    height: 19px;
    margin-left: 1px;
    background-color: #d3dbec;
}
.hend svg {
    width: 8px;
    height: 16px;
}
.combo {
    flex: none;
    display: flex;
    align-items: center;
    position: relative;
    width: 119px;
    height: 15px;
    margin-right: 1px;
    background-color: #fff;
}
.combo select, .combo input {
    appearance: none;
    flex: 1;
    min-width: 0;
    height: 100%;
    padding-left: 2px;
}
.combo > svg {
    width: 10px;
    height: 15px;
    padding: 1px 2px;
    border: 1px solid #fff;
    background-color: #cdd6ea;
    pointer-events: none;
}

/* layout */
.workspace {
    flex: 1;
    min-height: 0;
    display: flex;
    gap: 3px;
    padding: 4px 0 0 5px;
}
.navigator {
    flex: none;
    width: 200px;
    display: flex;
    flex-direction: column;
    background-color: #adb9d2;
}
.panel-head {
    flex: none;
    display: flex;
    align-items: center;
    height: 23px;
    padding-left: 4px;
    background-color: #b9c5db;
}
.panel-head h2 {
    margin-left: 3px;
    flex: 1;
}
.head-tools {
    display: flex;
    align-items: center;
    height: 23px;
    padding: 0 2px 0 4px;
    background-color: #c2cce3;
}
.head-tools button {
    width: 17px;
    height: 18px;
    display: flex;
    align-items: center;
    justify-content: center;
}
.head-tools .wide {
    width: 27px;
    gap: 4px;
}
.arrow {
    width: 7px;
    height: 7px;
}
.trans-tools .arrow {
    margin: 0 2px;
}
.plain {
    display: flex;
    align-items: center;
    justify-content: center;
    width: 17px;
}
.head-tools .plain {
    margin-left: 4px;
    width: 16px;
}
.head-tools .plain:last-child {
    margin-left: 2px;
}
.plain svg {
    width: 10px;
    height: 10px;
}

/* project tree */
.tree-pane {
    flex: 1;
    min-height: 0;
    display: flex;
    background-color: #fff;
    border-bottom: 1px solid #77808f;
}
.tree-scroll {
    flex: 1;
    min-width: 0;
    overflow: hidden;
}
.tree-head {
    height: 17px;
    background-color: #f2f2f4;
    border-bottom: 2px solid #d5d2cc;
}
.tree li {
    position: relative;
}
.tree ul {
    padding-left: 16px;
}
.tree ul li::before {
    content: "";
    position: absolute;
    left: 0;
    top: 0;
    bottom: 0;
    border-left: 1px solid #808080;
}
.tree ul li.end::before {
    bottom: auto;
    height: 9px;
}
.tree ul li::after {
    content: "";
    position: absolute;
    left: 0;
    top: 8px;
    width: 6px;
    border-top: 1px solid #808080;
}
.row {
    display: flex;
    align-items: center;
    height: 16px;
    padding-left: 5px;
    white-space: nowrap;
}
.row i {
    position: relative;
    z-index: 1;
    flex: none;
    width: 9px;
    height: 9px;
    margin-right: 5px;
}
.row .exp {
    border: 1px solid #7b98c8;
    background: linear-gradient(#fff, #b8cae8);
    color: #1c3a78;
    font-style: normal;
    line-height: 6px;
    text-align: center;
}
.row span {
    margin-left: 14px;
}
.sel {
    background-color: #e4e0ea;
}

/* scroll bars */
.scrollbar {
    flex: none;
    width: 13px;
    display: flex;
    flex-direction: column;
    align-items: center;
    background-color: #f5f4f0;
}
.scrollbar button {
    width: 12px;
    height: 12px;
    border-radius: 1px;
    background: linear-gradient(#dbe5fe, #b5c8f6);
}
.scrollbar svg, .combo i svg {
    width: 12px;
    height: 12px;
}
.scrollbar .thumb {
    width: 11px;
    height: 12px;
    margin: 1px 0;
    border: 1px solid #a9bff0;
    border-radius: 1px;
    background-color: #c5d4fb;
}
.scrollbar button:last-child {
    margin-top: auto;
}
.tree-bar .thumb {
    height: 157px;
}
.grid-bar .thumb {
    height: 6px;
    margin-top: 116px;
}

/* filters */
.filter-head {
    flex: none;
    height: 19px;
    margin-top: 6px;
    padding: 3px 4px;
    background-color: #f1f1f2;
    border-bottom: 2px solid #d8d4c4;
}
.filter-pane {
    flex: none;
    display: flex;
    height: 147px;
    background-color: #fff;
}
.filters {
    flex: 1;
    overflow: hidden;
    padding: 7px 8px 0;
}
.filters label {
    display: flex;
    align-items: center;
    gap: 2px;
    height: 16px;
}
.filters input {
    appearance: none;
    width: 11px;
    height: 11px;
    border: 1px solid #3e6a96;
    border-radius: 50%;
    background-color: #f4f4f0;
}
.filters input:checked {
    background: radial-gradient(circle, #28a828 0 2px, #f4f4f0 3px);
}
.dots {
    flex: none;
    height: 6px;
    padding-top: 1px;
    background: linear-gradient(#efede2, #c8c6b4);
}
.dots i {
    display: block;
    width: 28px;
    height: 2px;
    margin: 0 auto;
    background: repeating-linear-gradient(90deg, #2c3d5c 0 2px, transparent 2px 3px);
}

/* experts */
.expert {
    flex: none;
    display: flex;
    align-items: center;
    gap: 4px;
    height: 26px;
    padding-left: 4px;
    color: #fff;
    font-family: "Open Sans", sans-serif;
    font-weight: bold;
}
.expert svg {
    width: 20px;
    height: 20px;
}
.expert.active {
    background-color: #e1e6eb;
    color: #111;
}
.shortcuts {
    flex: none;
    height: 25px;
    justify-content: flex-end;
}
.shortcuts svg {
    width: 14px;
    height: 14px;
}

/* document */
.centre {
    flex: 1;
    min-width: 0;
    margin-top: -4px;
    display: flex;
    flex-direction: column;
}
.doctabs {
    flex: none;
    display: flex;
    align-items: flex-end;
    height: 23px;
    padding: 0 0 1px 2px;
}
.doctab {
    display: flex;
    align-items: center;
    gap: 2px;
    height: 17px;
    padding: 0 3px;
    border-radius: 2px 2px 0 0;
    background-color: #fff1cb;
}
.tabnav {
    margin: 0 0 4px auto;
    padding-right: 2px;
    display: flex;
    gap: 3px;
    color: #d5dceb;
}
.tabnav svg {
    width: 8px;
    height: 10px;
}
.document {
    flex: 1;
    min-height: 0;
    display: flex;
    flex-direction: column;
    border: 1px solid #d6d2c4;
    border-bottom: none;
    background-color: #f3f1ea;
}
.lookbar {
    flex: none;
    display: flex;
    align-items: center;
    height: 22px;
    padding-left: 6px;
    background-color: #fff1cb;
    border: 1px solid #f6f3e8;
}
.lookbar > svg {
    width: 11px;
    height: 11px;
    margin-right: 2px;
}
.lookbar button {
    display: flex;
    justify-content: center;
    width: 18px;
}
.lookbar .lookin {
    margin: 0 3px 0 18px;
}
.lookbar .opt {
    width: 26px;
}
.lookbar .small {
    width: 10px;
    height: 13px;
}
.combo.big {
    width: 197px;
    height: 17px;
    border: 1px solid #8aa0c4;
}
.combo.lookfor {
    flex: 1;
    margin: 0 2px;
}
.combo i {
    display: flex;
    align-items: center;
    justify-content: center;
    width: 13px;
    height: 15px;
    background: linear-gradient(#dbe5fe, #b5c8f6);
}
.gridpane {
    flex: 1;
    min-height: 0;
    display: flex;
    margin-top: 2px;
    border-top: 1px solid #b5b2a8;
    background-color: #fff;
}
.gridscroll {
    flex: 1;
    overflow: hidden;
}
.grid {
    width: 100%;
    table-layout: fixed;
    border-collapse: separate;
    border-spacing: 0;
}
.c-icon {
    width: 14px;
}
.c-id {
    width: 53px;
}
.c-type {
    width: 97px;
}
.c-src {
    width: 340px;
}
.c-flag {
    width: 14px;
}
.grid th {
    height: 18px;
    padding: 0 0 0 1px;
    background-color: #f2f2f3;
    border-bottom: 1px solid #cfccc2;
    font-weight: normal;
    text-align: left;
}
.grid th:first-child {
    padding-left: 2px;
}
.grid th:nth-child(2), .grid th:nth-child(n+5) {
    border-left: 1px solid #c4c1b8;
}
.grid th svg {
    width: 11px;
    height: 11px;
}
.grid td {
    height: 18px;
    padding: 0;
    border-bottom: 1px solid #8b9296;
    white-space: nowrap;
}
/* keeps the average row pitch between 17 and 18 */
.grid tr:nth-child(5n+2) td, .grid tr:nth-child(5n+4) td {
    height: 17px;
}
.grid tr:nth-child(even) td {
    background-color: #d6e6ee;
}
.grid td:first-child {
    padding-left: 2px;
}
.grid td:nth-child(3) {
    padding-left: 2px;
}
.grid td:nth-child(n+4) {
    padding-left: 20px;
    font-family: "Liberation Sans", Arial, sans-serif;
    font-size: 11px;
}
.grid td svg {
    width: 12px;
    height: 12px;
}

/* translator */
.translator {
    flex: none;
    display: flex;
    flex-direction: column;
    height: 208px;
    margin-top: 4px;
    background-color: #9ba9c4;
}
.trans-head {
    flex: none;
    display: flex;
    align-items: center;
    height: 22px;
    padding: 0 1px 0 4px;
    background-color: #b9c5db;
    border-bottom: 1px solid #93a0ba;
}
.trans-head h2 {
    margin-left: 3px;
    flex: 1;
}
.trans-tools {
    flex: none;
    display: flex;
    align-items: center;
    height: 21px;
    padding: 0 5px 0 2px;
    background-color: #bfc9e2;
}
.letter {
    font-family: "Liberation Serif", serif;
    font-size: 11px;
    font-weight: bold;
}
.letter sup {
    font-size: 8px;
    line-height: 8px;
}
.trans-body {
    flex: 1;
    min-height: 0;
    display: flex;
    gap: 4px;
}
.editors {
    flex: 1;
    display: flex;
    flex-direction: column;
    border-right: 1px solid #a9a79f;
    background-color: #9ba9c4;
}
.editors textarea {
    display: block;
    resize: none;
    background-color: #fff;
}
.editors .source {
    height: 52px;
    margin-bottom: 4px;
    border-bottom: 1px solid #a9a79f;
}
.editors .target {
    height: 48px;
    margin-bottom: 4px;
    border: 1px solid #a9a79f;
    border-width: 1px 0;
    background-color: #ebe8d7;
}
.reftabs {
    display: flex;
    height: 14px;
    padding: 1px 0 0 4px;
    background: linear-gradient(#a3b1cb, #fff);
    border-bottom: 1px solid #777;
}
.tab {
    position: relative;
    height: 13px;
    padding: 0 7px 0 13px;
}
.tab span {
    position: relative;
}
.shape {
    position: absolute;
    left: 0;
    top: 0;
    width: 100%;
    height: 13px;
}
.reference {
    flex: 1;
    display: flex;
    padding: 3px;
    background-color: #fff;
}
.reference textarea {
    flex: 1;
    border: 1px solid #b5b5b5;
}
.refnav {
    flex: none;
    display: flex;
    align-items: center;
    justify-content: center;
    gap: 10px;
    width: 75px;
    padding: 0 2px 9px 0;
}
.refnav svg {
    width: 12px;
    height: 12px;
}
.terms {
    flex: none;
    width: 51px;
    display: flex;
    flex-direction: column;
    padding-bottom: 2px;
}
.terms .tab {
    height: 14px;
    padding: 0 6px 0 18px;
    background: linear-gradient(#a3b1cb, #fff);
    text-align: left;
}
.terms p {
    flex: 1;
    margin: 2px 2px 0 3px;
    padding-top: 5px;
    border: 1px solid #a9a79f;
    background-color: #fff;
    line-height: 10px;
    text-align: center;
}

/* side tabs */
.sidetabs {
    flex: none;
    width: 20px;
    display: flex;
    flex-direction: column;
    gap: 8px;
}
.sidetabs button {
    display: flex;
    align-items: center;
    gap: 2px;
    padding: 6px 0 3px;
    background-color: #364a6e;
    color: #dbe2ef;
    writing-mode: vertical-rl;
}
.sidetabs svg {
    width: 12px;
    height: 12px;
}

/* bottom */
.dock {
    flex: none;
    height: 23px;
    padding: 6px 5px 0;
}
.dock button {
    display: flex;
    align-items: center;
    gap: 2px;
    height: 16px;
    padding: 0 3px 0 4px;
    background-color: #364a6e;
    color: #dbe2ef;
}
.dock svg {
    width: 12px;
    height: 12px;
}
.statusbar {
    flex: none;
    display: flex;
    align-items: center;
    gap: 3px;
    height: 16px;
    padding: 0 4px 0 2px;
    background-color: #293956;
    color: #8791a5;
}
.statusbar i {
    width: 2px;
    height: 11px;
    background-color: #e6e6e0;
}
.statusbar .ready {
    flex: 1;
    color: #c9d1e0;
}
.statusbar .fill {
    width: 91px;
}
.statusbar .lit {
    color: #fff;
}

/* overlay */
.tooltip {
    position: absolute;
    left: 160px;
    top: 117px;
    height: 14px;
    padding: 0 1px;
    border: 1px solid #222;
    background-color: #ffffe1;
    box-shadow: 1px 1px 2px rgba(0, 0, 0, 0.4);
}
.pointer {
    position: absolute;
    left: 162px;
    top: 96px;
    width: 100px;
    height: 40px;
}
.callout {
    position: absolute;
    left: 261px;
    top: 122px;
    width: 197px;
    height: 134px;
    padding-top: 29px;
    border: 1px solid #b01010;
    background-color: #fff;
    box-shadow: 4px 4px 5px rgba(0, 0, 0, 0.45);
    color: #c00000;
    font-family: "Liberation Sans", Arial, sans-serif;
    font-size: 21px;
    line-height: 24px;
    text-align: center;
}
```
